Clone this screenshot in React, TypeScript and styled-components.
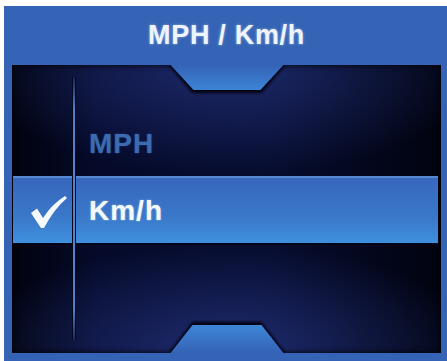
import React from 'react';
import styled, { createGlobalStyle } from 'styled-components';

const GlobalStyle = createGlobalStyle`
  body {
    margin: 6px 0 0 4px;
    background: #ffffff;
    font-family: 'Liberation Sans', Arial, sans-serif;
  }
`;

const Frame = styled.div`
  width: 443px;
  height: 355px;
  display: flex;
  flex-direction: column;
  background: #3563b5;
`;

const Header = styled.div`
  height: 59px;
  display: flex;
  align-items: center;
  justify-content: center;
  padding-left: 2px;
  box-sizing: border-box;
`;

const Title = styled.h1`
  margin: 0;
  font-size: 27px;
  font-weight: 700;
  letter-spacing: 0.7px;
  color: #eef4ff;
  text-shadow: 0 0 3px rgba(200, 225, 255, 0.6);
`;

const Panel = styled.div`
  position: relative;
  flex: 1;
  margin: 0 6px 8px 8px;
  overflow: hidden;
  background:
    radial-gradient(ellipse 260px 110px at 50% 0%, rgba(52, 72, 170, 0.5), transparent 100%),
    radial-gradient(ellipse 260px 110px at 50% 100%, rgba(52, 72, 170, 0.55), transparent 100%),
    linear-gradient(90deg, #01030f 0%, #050a2a 20%, #060c2e 60%, #01030f 100%);
  box-shadow: inset 0 0 6px #000;
`;

const Rows = styled.div`
  display: flex;
  flex-direction: column;
  padding-top: 44px;
`;

const Row = styled.div<{ selected?: boolean }>`
  height: 67px;
  margin: 0 3px 0 1px;
  display: grid;
  grid-template-columns: 64px 1fr;
  align-items: center;
  box-sizing: border-box;
  background: ${({ selected }) =>
    selected ? 'linear-gradient(180deg, #3767bd 0%, #3a78c9 60%, #3f90de 100%)' : 'transparent'};
  border-top: 2px solid ${({ selected }) => (selected ? '#5689d2' : 'transparent')};
  box-shadow: ${({ selected }) => (selected ? '0 2px 0 #02061a' : 'none')};
`;

const CheckCell = styled.div`
  display: flex;
  align-items: center;
  padding-left: 17px;
  padding-top: 2px;
`;

const Label = styled.span<{ selected?: boolean }>`
  padding-left: 12px;
  font-size: 28px;
  font-weight: 700;
  letter-spacing: 1px;
  color: ${({ selected }) => (selected ? '#f4f8ff' : '#3b6bb0')};
  text-shadow: ${({ selected }) =>
    selected ? '0 0 2px rgba(230, 240, 255, 0.6)' : '0 0 2px rgba(60, 110, 180, 0.5)'};
`;

const Divider = styled.div`
  position: absolute;
  left: 61px;
  top: 13px;
  bottom: 13px;
  width: 2px;
  background: linear-gradient(180deg, rgba(80, 128, 200, 0.2) 0%, #5283c8 12%, #5283c8 88%, rgba(80, 128, 200, 0.2) 100%);
  box-shadow: -1px 0 0 #03081e, 1px 0 0 #03081e;
`;

const Notch = styled.svg<{ bottom?: boolean }>`
  position: absolute;
  left: 50%;
  transform: translateX(-50%);
  ${({ bottom }) => (bottom ? 'bottom: 0;' : 'top: 0;')}
`;

const Check = () => (
  <svg width="38" height="34" viewBox="0 0 38 34">
    <path
      d="M1 18 L7 13.5 L13 23 Q22 9 35 1 L37 3 Q24 14 14 33 L11 33 Z"
      fill="#f6f9ff"
    />
  </svg>
);

const TopNotch = () => (
  <Notch width="125" height="32" viewBox="0 0 125 32">
    <defs>
      <linearGradient id="tn" x1="0" y1="0" x2="0" y2="1">
        <stop offset="0" stopColor="#3563b5" />
        <stop offset="1" stopColor="#3c84d6" />
      </linearGradient>
      <filter id="tb" x="-20%" y="-20%" width="140%" height="160%">
        <feGaussianBlur stdDeviation="1.5" />
      </filter>
    </defs>
    <polygon points="4,0 28,28 97,28 121,0" fill="#01030f" filter="url(#tb)" />
    <polygon points="6,0 29,25 96,25 119,0" fill="url(#tn)" />
  </Notch>
);

const BottomNotch = () => (
  <Notch bottom width="125" height="33" viewBox="0 0 125 33">
    <defs>
      <linearGradient id="bn" x1="0" y1="0" x2="0" y2="1">
        <stop offset="0" stopColor="#3d86d8" />
        <stop offset="1" stopColor="#3563b5" />
      </linearGradient>
      <filter id="bb" x="-20%" y="-40%" width="140%" height="160%">
        <feGaussianBlur stdDeviation="1.5" />
      </filter>
    </defs>
    <polygon points="4,33 28,2 97,2 121,33" fill="#01030f" filter="url(#bb)" />
    <polygon points="6,33 28,5 97,5 119,33" fill="url(#bn)" />
  </Notch>
);

const options = [
  { label: 'MPH', selected: false },
  { label: 'Km/h', selected: true },
  { label: '', selected: false },
];

export default function App() {
  return (
    <>
      <GlobalStyle />
      <Frame>
        <Header>
          <Title>MPH / Km/h</Title>
        </Header>
        <Panel>
          <TopNotch />
          <Rows>
            {options.map((o, i) => (
              <Row key={i} selected={o.selected}>
                <CheckCell>{o.selected && <Check />}</CheckCell>
                <Label selected={o.selected}>{o.label}</Label>
              </Row>
            ))}
          </Rows>
          <Divider />
          <BottomNotch />
        </Panel>
      </Frame>
    </>
  );
}
